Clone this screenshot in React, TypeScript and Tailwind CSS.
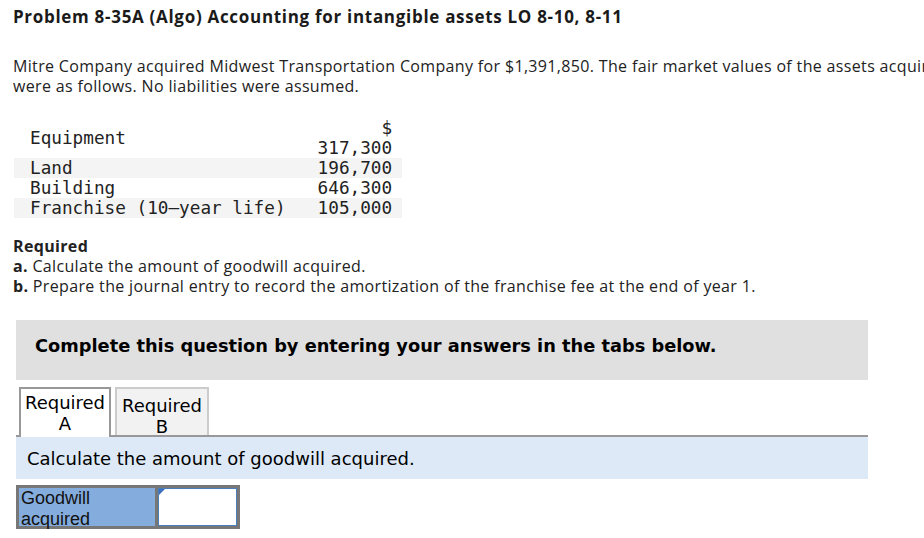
import React from 'react';

const rows = [
  { label: 'Land', value: '196,700', shaded: true },
  { label: 'Building', value: '646,300', shaded: false },
  { label: 'Franchise (10–year life)', value: '105,000', shaded: true },
];

export default function App() {
  return (
    <div className="w-[924px] h-[538px] overflow-hidden bg-white text-[#222]">
      <div className="w-[1000px]">
        {/* Problem header */}
        <div className="pl-[13px] pt-[7px] font-['Open_Sans',sans-serif]">
          <h1 className="text-[17px] leading-[20px] font-bold tracking-[0.7px] text-[#1a1a1a]">
            Problem 8-35A (Algo) Accounting for intangible assets LO 8-10, 8-11
          </h1>
          <p className="mt-[29px] w-[950px] text-[16px] leading-[20px] tracking-[0.34px]">
            Mitre Company acquired Midwest Transportation Company for $1,391,850. The fair market values of the assets acquired
            were as follows. No liabilities were assumed.
          </p>
        </div>

        {/* Assets table */}
        <table className="ml-[14px] mt-[22px] border-collapse font-['DejaVu_Sans_Mono',monospace] text-[17.7px] leading-[20px] text-[#222]">
          <tbody>
            <tr>
              <td className="pl-[16px] pr-[22px] align-middle">Equipment</td>
              <td className="pl-[10px] pr-[10px] text-right">
                <div>$</div>
                <div>317,300</div>
              </td>
            </tr>
            {rows.map((r) => (
              <tr key={r.label} className={r.shaded ? 'bg-[#f4f4f4]' : ''}>
                <td className="pl-[16px] pr-[22px] whitespace-pre">{r.label}</td>
                <td className="pl-[10px] pr-[10px] text-right">{r.value}</td>
              </tr>
            ))}
          </tbody>
        </table>

        {/* Requirements */}
        <div className="pl-[13px] mt-[18px] font-['Open_Sans',sans-serif] text-[16px] leading-[20px] tracking-[0.34px]">
          <div className="font-bold">Required</div>
          <div>
            <span className="font-bold">a.</span> Calculate the amount of goodwill acquired.
          </div>
          <div>
            <span className="font-bold">b.</span> Prepare the journal entry to record the amortization of the franchise fee at the end of year 1.
          </div>
        </div>

        {/* Instruction box */}
        <div className="ml-[16px] mt-[24px] w-[852px] h-[60px] bg-[#e0e0e0] flex items-center pl-[19px] pb-[8px]">
          <span className="font-['DejaVu_Sans',sans-serif] font-bold text-[17.8px] text-black">
            Complete this question by entering your answers in the tabs below.
          </span>
        </div>

        {/* Tabs */}
        <div className="ml-[16px] w-[852px] mt-[9px]">
          <div className="flex items-end gap-[4px] pl-[3px] h-[48px] border-b-2 border-[#999]">
            <div className="w-[92px] h-[50px] -mb-[2px] border-2 border-b-0 border-[#999] bg-white flex flex-col items-center justify-center font-['DejaVu_Sans',sans-serif] text-[18px] leading-[21px] text-black">
              <span>Required</span>
              <span>A</span>
            </div>
            <div className="w-[94px] h-[48px] border-2 border-b-0 border-[#ccc] bg-[#f2f2f2] flex flex-col items-center justify-center pt-[8px] font-['DejaVu_Sans',sans-serif] text-[18px] leading-[21px] text-black">
              <span>Required</span>
              <span>B</span>
            </div>
          </div>
          <div className="h-[42px] bg-[#dde9f6] flex items-center pl-[11px] font-['DejaVu_Sans',sans-serif] text-[18px] text-black">
            Calculate the amount of goodwill acquired.
          </div>

          {/* Answer grid */}
          <div className="mt-[6px] flex border-[3px] border-[#777] w-[224px] h-[44px]">
            <div className="w-[139px] bg-[#84acdd] border-r-[3px] border-[#777] pl-[2px] font-['Liberation_Sans',sans-serif] text-[18px] leading-[21px] text-[#111]">
              Goodwill
              <br />
              acquired
            </div>
            <div className="relative flex-1 bg-white border border-[#4a7ebb]">
              <svg className="absolute left-0 top-0" width="6" height="6" viewBox="0 0 6 6">
                <polygon points="0,0 6,0 0,6" fill="#3b6fc0" />
              </svg>
            </div>
          </div>
        </div>
      </div>
    </div>
  );
}
